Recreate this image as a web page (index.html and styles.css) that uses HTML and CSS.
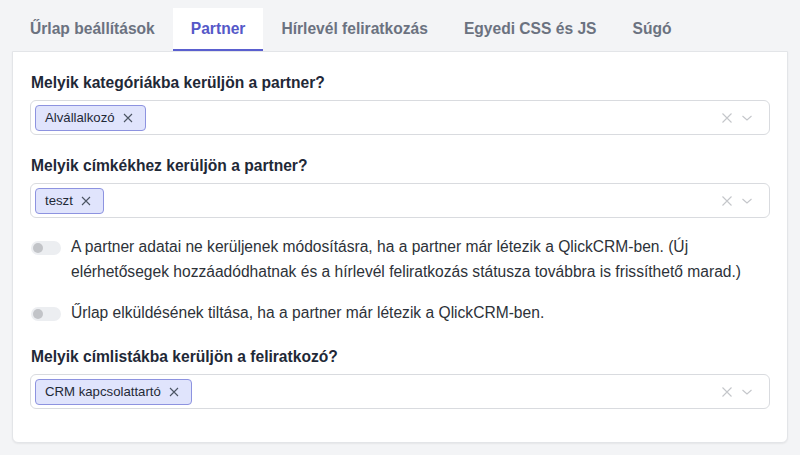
FILE: index.html
```html
<!DOCTYPE html>
<html lang="hu">
<head>
<meta charset="utf-8">
<link rel="stylesheet" href="styles.css">
</head>
<body>
<div class="page">
  <nav class="tabs">
    <div class="tab">Űrlap beállítások</div>
    <div class="tab active">Partner</div>
    <div class="tab">Hírlevél feliratkozás</div>
    <div class="tab">Egyedi CSS és JS</div>
    <div class="tab">Súgó</div>
  </nav>
  <section class="card">
    <div class="group">
      <div class="label">Melyik kategóriákba kerüljön a partner?</div>
      <div class="select">
        <div class="tags"><span class="tag">Alvállalkozó <svg class="tx" viewBox="0 0 10 10"><path d="M1 1L9 9M9 1L1 9" stroke="currentColor" stroke-width="1.1" fill="none"/></svg></span></div>
        <div class="ctrls">
          <svg class="ic" viewBox="0 0 12 12"><path d="M1.5 1.5L10.5 10.5M10.5 1.5L1.5 10.5" stroke="currentColor" stroke-width="1.1" fill="none"/></svg>
          <svg class="ic" viewBox="0 0 12 12"><path d="M1.5 4L6 8L10.5 4" stroke="currentColor" stroke-width="1.1" fill="none"/></svg>
        </div>
      </div>
    </div>
    <div class="group">
      <div class="label">Melyik címkékhez kerüljön a partner?</div>
      <div class="select">
        <div class="tags"><span class="tag">teszt <svg class="tx" viewBox="0 0 10 10"><path d="M1 1L9 9M9 1L1 9" stroke="currentColor" stroke-width="1.1" fill="none"/></svg></span></div>
        <div class="ctrls">
          <svg class="ic" viewBox="0 0 12 12"><path d="M1.5 1.5L10.5 10.5M10.5 1.5L1.5 10.5" stroke="currentColor" stroke-width="1.1" fill="none"/></svg>
          <svg class="ic" viewBox="0 0 12 12"><path d="M1.5 4L6 8L10.5 4" stroke="currentColor" stroke-width="1.1" fill="none"/></svg>
        </div>
      </div>
    </div>
    <div class="toggle-row">
      <span class="switch"><span class="knob"></span></span>
      <span class="ttext">A partner adatai ne kerüljenek módosításra, ha a partner már létezik a QlickCRM-ben. (Új elérhetősegek hozzáadódhatnak és a hírlevél feliratkozás státusza továbbra is frissíthető marad.)</span>
    </div>
    <div class="toggle-row">
      <span class="switch"><span class="knob"></span></span>
      <span class="ttext">Űrlap elküldésének tiltása, ha a partner már létezik a QlickCRM-ben.</span>
    </div>
    <div class="group last">
      <div class="label">Melyik címlistákba kerüljön a feliratkozó?</div>
      <div class="select">
        <div class="tags"><span class="tag">CRM kapcsolattartó <svg class="tx" viewBox="0 0 10 10"><path d="M1 1L9 9M9 1L1 9" stroke="currentColor" stroke-width="1.1" fill="none"/></svg></span></div>
        <div class="ctrls">
          <svg class="ic" viewBox="0 0 12 12"><path d="M1.5 1.5L10.5 10.5M10.5 1.5L1.5 10.5" stroke="currentColor" stroke-width="1.1" fill="none"/></svg>
          <svg class="ic" viewBox="0 0 12 12"><path d="M1.5 4L6 8L10.5 4" stroke="currentColor" stroke-width="1.1" fill="none"/></svg>
        </div>
      </div>
    </div>
  </section>
</div>
</body>
</html>
```
FILE: styles.css
```css
* { box-sizing: border-box; }
html, body { margin: 0; padding: 0; }
body {
  background: #f3f4f6;
  font-family: "Liberation Sans", Arial, sans-serif;
  color: #1f2937;
  width: 800px;
  height: 455px;
  overflow: hidden;
}
.page { padding: 8px 12px 0 12px; }
.tabs {
  display: flex;
  height: 43px;
}
.tab {
  padding: 0 18px;
  display: flex;
  align-items: center;
  font-size: 15.6px;
  font-weight: bold;
  color: #6b7280;
  padding-bottom: 2px;
}
.tab.active {
  background: #fff;
  color: #5558c8;
  border-bottom: 2px solid #5a5fcf;
  padding-bottom: 0;
}
.card {
  background: #fff;
  border: 1px solid #e3e5e8;
  border-radius: 0 0 6px 6px;
  box-shadow: 0 1px 2px rgba(0,0,0,0.06);
  padding: 22px 17px 34px 17px;
  height: 392px;
}
.group { margin-bottom: 22px; }
.group.last { margin-bottom: 0; margin-top: 23px; }
.label {
  font-size: 15.6px;
  font-weight: bold;
  color: #1f2937;
  line-height: 18px;
  margin-bottom: 8px;
  padding-left: 1px;
}
.select {
  display: flex;
  align-items: center;
  height: 35px;
  border: 1px solid #d9dbdf;
  border-radius: 6px;
  padding: 0 4px;
}
.tags { flex: 1; display: flex; }
.tag {
  display: inline-flex;
  align-items: center;
  height: 26px;
  padding: 0 12px 0 9px;
  background: #e0e4fc;
  border: 1px solid #8d93e0;
  border-radius: 4px;
  font-size: 13.2px;
  color: #1f2937;
}
.tx {
  width: 10px;
  height: 10px;
  margin-left: 8px;
  color: #4b5563;
}
.ctrls {
  display: flex;
  align-items: center;
  gap: 8px;
  padding-right: 12px;
  color: #c4c6ca;
}
.ic { width: 12px; height: 12px; }
.toggle-row {
  display: flex;
  align-items: flex-start;
  margin-top: -6px;
  margin-bottom: 22px;
}
.switch {
  flex: none;
  width: 30px;
  height: 14px;
  border-radius: 7px;
  background: #eceef1;
  margin: 7px 10px 0 1px;
  position: relative;
}
.knob {
  position: absolute;
  left: 2px;
  top: 2px;
  width: 10px;
  height: 10px;
  border-radius: 50%;
  background: #c2c4c8;
}
.ttext {
  font-size: 15.6px;
  line-height: 25px;
  color: #2d3239;
}
```
